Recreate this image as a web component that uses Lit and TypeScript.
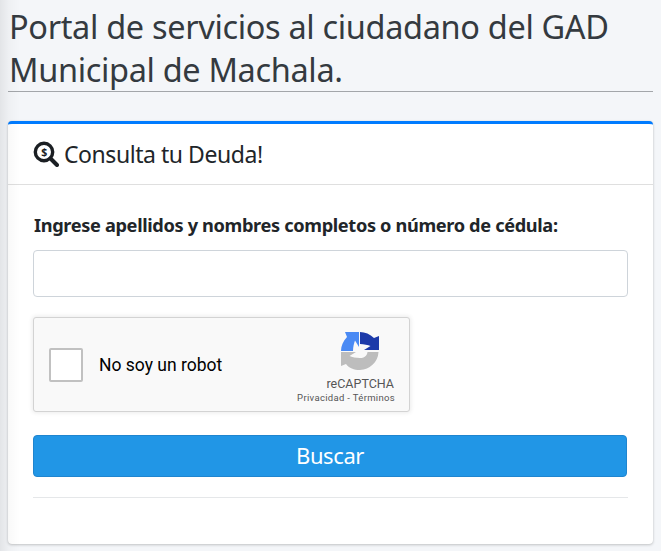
import { LitElement, html, css } from "lit";
import { customElement } from "lit/decorators.js";

@customElement("app-root")
export class AppRoot extends LitElement {
  static styles = css`
    :host {
      display: block;
      position: relative;
      width: 661px;
      height: 551px;
      overflow: hidden;
      box-sizing: border-box;
      padding: 0 8px;
      background: #f4f6f9;
      font-family: "Noto Sans", "Open Sans", sans-serif;
      color: #212529;
    }
    :host::after {
      content: "";
      position: absolute;
      inset: 0 auto 0 0;
      width: 20px;
      background: linear-gradient(90deg, rgba(0, 0, 0, 0.07) 0, rgba(0, 0, 0, 0.025) 9px, rgba(0, 0, 0, 0) 20px);
      pointer-events: none;
    }
    h1 {
      margin: 0;
      padding: 5px 0 0 1px;
      height: 86px;
      box-sizing: content-box;
      font-size: 32.5px;
      line-height: 43px;
      font-weight: 400;
      color: #343a40;
      letter-spacing: -0.34px;
      border-bottom: 1px solid #a3a6aa;
      white-space: nowrap;
    }
    .card {
      margin-top: 29px;
      height: 423px;
      box-sizing: border-box;
      background: #fff;
      border-top: 3px solid #007bff;
      border-radius: 4px;
      box-shadow: 0 0 1px rgba(0, 0, 0, 0.13), 0 1px 3px rgba(0, 0, 0, 0.2);
    }
    .head {
      height: 61px;
      box-sizing: border-box;
      display: flex;
      align-items: center;
      gap: 5px;
      padding: 0 25px;
      border-bottom: 1px solid #dfdfdf;
      font-size: 23px;
      letter-spacing: -0.45px;
    }
    .head svg { display: block; flex: none; }
    .body {
      padding: 27px 25px 0;
      display: flex;
      flex-direction: column;
    }
    label {
      padding-left: 1px;
      font-size: 18.2px;
      line-height: 26px;
      font-weight: 700;
      letter-spacing: -0.35px;
      white-space: nowrap;
    }
    .input {
      margin-top: 12px;
      height: 47px;
      box-sizing: border-box;
      border: 1px solid #ced4da;
      border-radius: 4px;
      background: #fff;
    }
    .captcha {
      margin-top: 20px;
      width: 377px;
      height: 95px;
      box-sizing: border-box;
      display: flex;
      align-items: center;
      background: #f9f9f9;
      border: 1px solid #d3d3d3;
      border-radius: 3px;
      box-shadow: 0 0 4px 1px rgba(0, 0, 0, 0.08);
      font-family: Roboto, "Liberation Sans", sans-serif;
    }
    .check {
      margin-left: 15px;
      width: 34px;
      height: 34px;
      box-sizing: border-box;
      flex: none;
      background: #fff;
      border: 2px solid #c1c1c1;
      border-radius: 2px;
    }
    .robot {
      margin-left: 16px;
      font-size: 17.5px;
      color: #000;
      flex: 1;
    }
    .brand {
      flex: none;
      align-self: stretch;
      display: flex;
      flex-direction: column;
      align-items: flex-end;
      padding: 14px 14px 0 0;
      box-sizing: border-box;
    }
    .brand svg { display: block; margin-right: 16px; }
    .name {
      margin: 7px 1px 0 0;
      font-size: 12.5px;
      line-height: 14px;
      color: #555;
    }
    .terms {
      margin-top: 1px;
      font-size: 9.5px;
      line-height: 12px;
      letter-spacing: 0.32px;
      color: #555;
      white-space: nowrap;
    }
    button {
      margin: 23px 1px 0 0;
      height: 42px;
      padding: 0 0 2px;
      border: 1px solid #1f85cf;
      border-radius: 4px;
      background: #2196e6;
      color: #fff;
      font: inherit;
      font-size: 22px;
      letter-spacing: -0.4px;
    }
    hr {
      margin: 20px 0 0;
      border: 0;
      border-top: 1px solid #e5e7e9;
    }
  `;

  render() {
    return html`
      <h1>Portal de servicios al ciudadano del GAD<br />Municipal de Machala.</h1>
      <section class="card">
        <div class="head">
          <svg width="26" height="26" viewBox="0 0 26 26" fill="none">
            <circle cx="11" cy="11" r="8.7" stroke="#1b1f23" stroke-width="3.4" />
            <path d="M17.5 17.5 24 24" stroke="#1b1f23" stroke-width="4" stroke-linecap="round" />
            <text x="11" y="14.8" text-anchor="middle" font-size="10.5" font-weight="700" fill="#1b1f23" font-family="Noto Sans">$</text>
          </svg>
          <span>Consulta tu Deuda!</span>
        </div>
        <div class="body">
          <label>Ingrese apellidos y nombres completos o número de cédula:</label>
          <div class="input"></div>
          <div class="captcha">
            <div class="check"></div>
            <div class="robot">No soy un robot</div>
            <div class="brand">
              <svg width="38" height="38" viewBox="0 0 38 38">
                <path d="M26.500 20H37.500A19 19 0 0 1 19 38C13 38 8 36 5 32L0 34V20H15L8.500 24C11 25 15 26 19 26C23 26 26 24 26.500 20Z" fill="#bdbdbd" />
                <path d="M0 19C0 14 2 9 6 5L4 0H18V15L14 8.500C13 11 12 15 12 19Z" fill="#4a8af4" />
                <path d="M19 0C24 0 29 2 33 6L38 4V18H23L29.500 14C27 13 23 12 19 12Z" fill="#1c3aa9" />
              </svg>
              <div class="name">reCAPTCHA</div>
              <div class="terms">Privacidad - Términos</div>
            </div>
          </div>
          <button>Buscar</button>
          <hr />
        </div>
      </section>
    `;
  }
}
